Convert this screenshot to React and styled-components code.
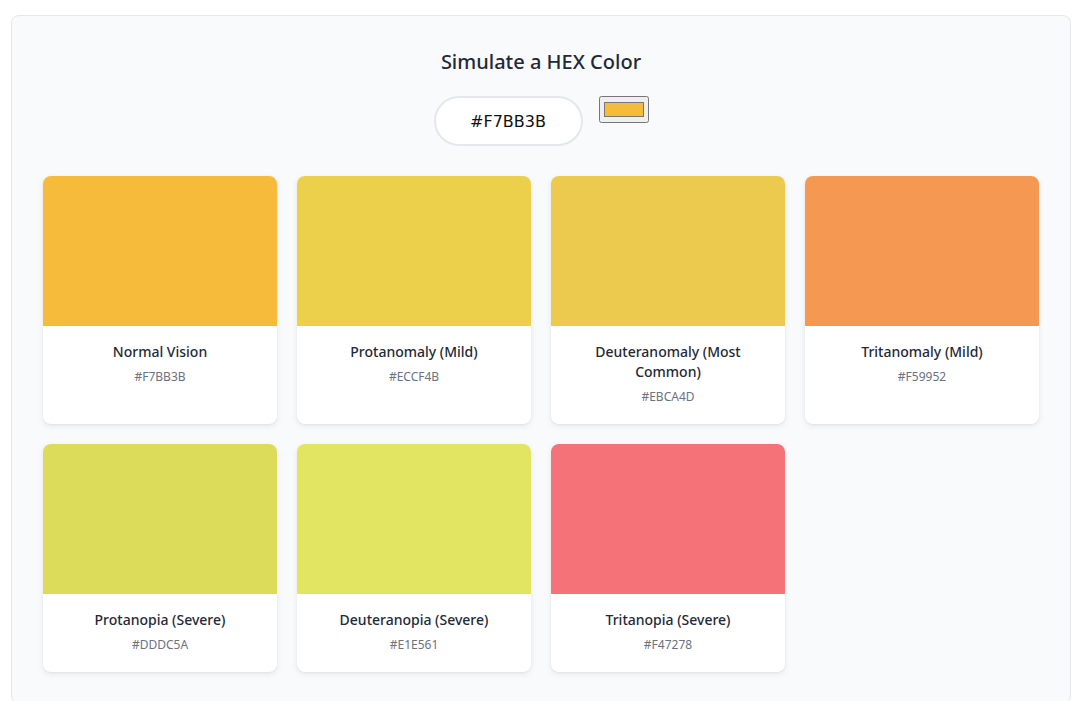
import React from "react";
import styled, { createGlobalStyle } from "styled-components";

const GlobalStyle = createGlobalStyle`
  html, body {
    margin: 0;
    padding: 0;
    background: #ffffff;
  }
  body {
    font-family: "Noto Sans", "DejaVu Sans", sans-serif;
  }
`;

const results = [
  { name: "Normal Vision", hex: "#F7BB3B" },
  { name: "Protanomaly (Mild)", hex: "#ECCF4B" },
  { name: "Deuteranomaly (Most Common)", hex: "#EBCA4D" },
  { name: "Tritanomaly (Mild)", hex: "#F59952" },
  { name: "Protanopia (Severe)", hex: "#DDDC5A" },
  { name: "Deuteranopia (Severe)", hex: "#E1E561" },
  { name: "Tritanopia (Severe)", hex: "#F47278" },
];

const App = () => {
  const [hex, setHex] = React.useState("#F7BB3B");

  return (
    <Page>
      <GlobalStyle />
      <Panel>
        <Heading>Simulate a HEX Color</Heading>
        <InputRow>
          <HexInput value={hex} onChange={(e) => setHex(e.target.value)} />
          <ColorPicker
            type="color"
            value={hex.toLowerCase()}
            onChange={(e) => setHex(e.target.value.toUpperCase())}
          />
        </InputRow>
        <Grid>
          {results.map((r) => (
            <Card key={r.name}>
              <Swatch color={r.hex} />
              <CardBody>
                <CardTitle>{r.name}</CardTitle>
                <CardHex>{r.hex}</CardHex>
              </CardBody>
            </Card>
          ))}
        </Grid>
      </Panel>
    </Page>
  );
};

export default App;

const Page = styled.div`
  padding: 15px 1px 0 11px;
`;

const Panel = styled.div`
  background-color: #f9fafb;
  border: 1px solid #e5e7eb;
  border-radius: 8px;
  padding: 32px 31px 31px 31px;
  display: flex;
  flex-direction: column;
  align-items: center;
`;

const Heading = styled.h2`
  margin: 0 0 20px;
  font-size: 20px;
  line-height: 28px;
  font-weight: 500;
  color: #1f2937;
`;

const InputRow = styled.div`
  display: flex;
  align-items: flex-start;
  gap: 16px;
  margin-bottom: 30px;
`;

const HexInput = styled.input`
  width: 149px;
  height: 50px;
  box-sizing: border-box;
  border: 2px solid #e5e7eb;
  border-radius: 9999px;
  background: #fff;
  text-align: center;
  font-family: "DejaVu Sans", sans-serif;
  font-size: 16px;
  color: #111;
  outline: none;
`;

const ColorPicker = styled.input`
  width: 50px;
  height: 27px;
  margin: 0;
  cursor: pointer;
`;

const Grid = styled.div`
  width: 100%;
  display: grid;
  grid-template-columns: repeat(4, 1fr);
  gap: 20px;
`;

const Card = styled.div`
  background: #fff;
  border-radius: 8px;
  overflow: hidden;
  box-shadow: 0 2px 6px rgba(0, 0, 0, 0.08), 0 1px 2px rgba(0, 0, 0, 0.04);
`;

const Swatch = styled.div`
  height: 150px;
  background-color: ${(p) => p.color};
`;

const CardBody = styled.div`
  padding: 16px 16px 17px;
  text-align: center;
`;

const CardTitle = styled.div`
  font-size: 14px;
  line-height: 20px;
  font-weight: 500;
  color: #1f2937;
  margin-bottom: 5px;
`;

const CardHex = styled.div`
  font-size: 12px;
  line-height: 20px;
  color: #6b7280;
`;
